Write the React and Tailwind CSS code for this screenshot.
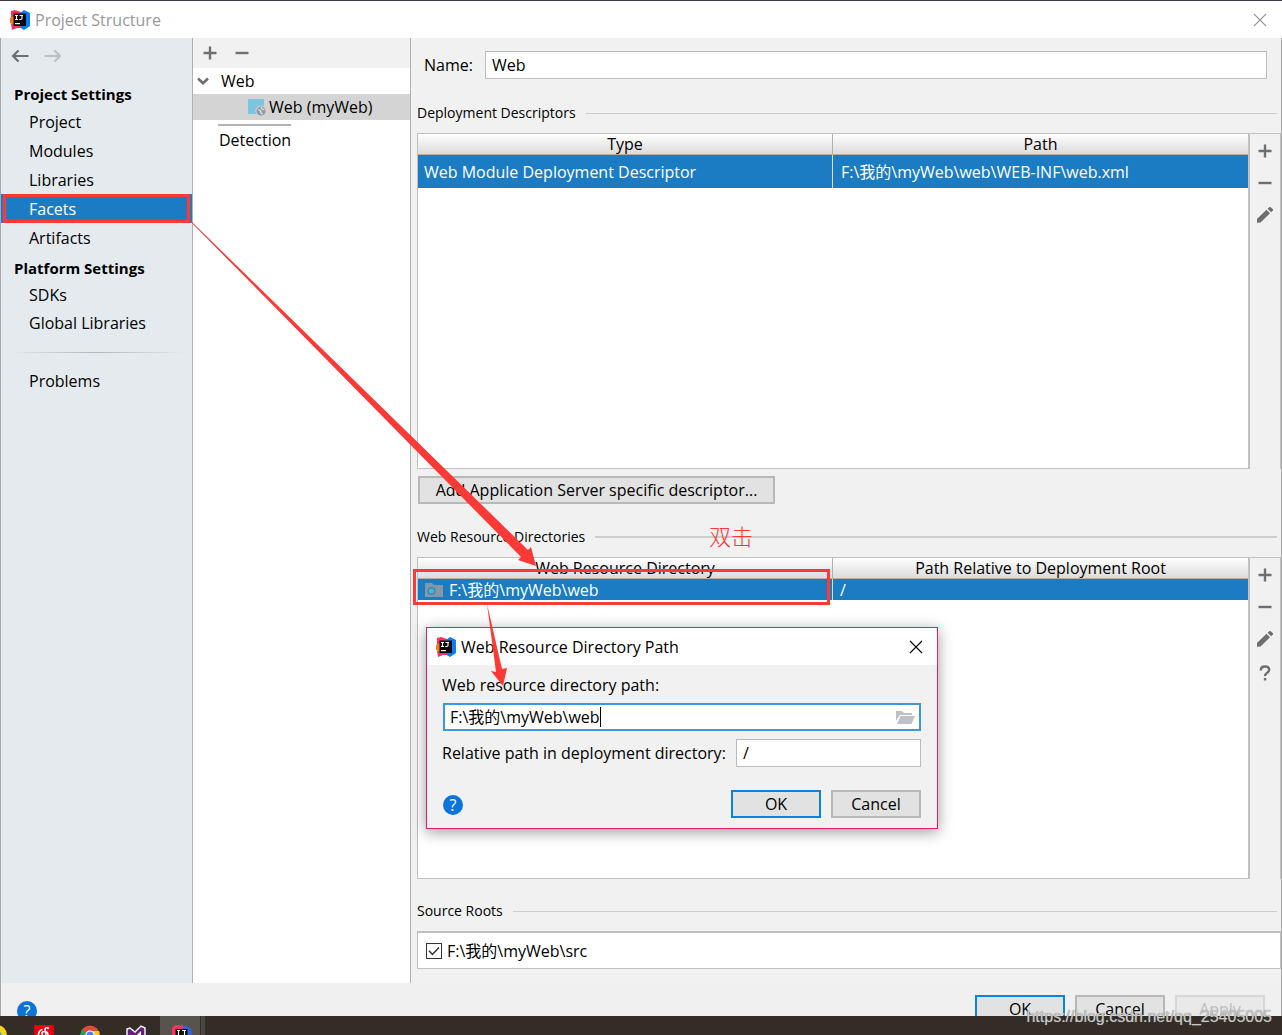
import { useState } from "react";

const projectItems = ["Project", "Modules", "Libraries", "Facets", "Artifacts"];
const platformItems = ["SDKs", "Global Libraries"];

function IdeaLogo() {
  return (
    <svg width="20" height="20" viewBox="0 0 20 20" className="shrink-0">
      <path d="M1 1 L5 0 L11 2 L10 10 L4 14 L1 9 Z" fill="#fe315d" />
      <path d="M0 8 L4 6 L5 15 L0 13 Z" fill="#f97a12" />
      <path d="M10 3 L14 0 L20 3 L20 16 L14 20 L9 17 Z" fill="#087cfa" />
      <path d="M1 14 L9 14 L12 18 L7 18 L2 20 Z" fill="#fe315d" />
      <rect x="3.5" y="3.5" width="12.5" height="12.5" fill="#0a0a0a" />
      <path d="M5 5.500h3M6.500 5.500v4M5 9.500h3M9.500 5.500h3.500M12 5.500v3q0 1.200-2.800 1" stroke="#fff" strokeWidth="1.1" fill="none" />
      <path d="M5 13.6h5" stroke="#fff" strokeWidth="1.2" />
    </svg>
  );
}

function PlusIcon() {
  return (
    <svg width="14" height="14" viewBox="0 0 14 14">
      <path d="M7 .5v13M.5 7h13" stroke="#6e6e6e" strokeWidth="2.4" />
    </svg>
  );
}

function MinusIcon() {
  return (
    <svg width="14" height="14" viewBox="0 0 14 14">
      <path d="M.5 7h13" stroke="#6e6e6e" strokeWidth="2.4" />
    </svg>
  );
}

function PencilIcon() {
  return (
    <svg width="18" height="18" viewBox="0 0 18 18">
      <path d="M1 13 L10.5 3.8 L14 7.3 L4.5 16.6 L1 16.8 Z" fill="#6e6e6e" />
      <path d="M11.6 2.8 L13.2 1.2 Q14 .6 14.8 1.2 L16.7 3.1 Q17.4 4 16.7 4.7 L15.1 6.3 Z" fill="#6e6e6e" />
    </svg>
  );
}

function QuestionIcon() {
  return (
    <svg width="14" height="16" viewBox="0 0 14 16">
      <path d="M2.800 5.400Q2.800 1.500 7 1.500T11.200 4.800Q11.200 6.600 9 8T7 11.200" stroke="#6e6e6e" strokeWidth="2.4" fill="none" />
      <rect x="5.800" y="13" width="2.500" height="2.500" fill="#6e6e6e" />
    </svg>
  );
}

function CloseIcon({ color }) {
  return (
    <svg width="14" height="14" viewBox="0 0 14 14">
      <path d="M1 1l12 12M13 1L1 13" stroke={color} strokeWidth="1.1" />
    </svg>
  );
}

function ArrowIcon({ color, flip }) {
  return (
    <svg width="18" height="14" viewBox="0 0 18 14" className={flip ? "rotate-180" : ""}>
      <path d="M17.5 7H2M7.5 1.5L2 7l5.5 5.5" stroke={color} strokeWidth="2.2" fill="none" />
    </svg>
  );
}

function HelpButton() {
  return (
    <button
      type="button"
      aria-label="Help"
      className="flex size-5 items-center justify-center rounded-full bg-[#0a74da] leading-5 text-white"
    >
      ?
    </button>
  );
}

function DialogButton({ children, primary, disabled }) {
  const look = primary
    ? "border-2 border-[#0a84e0] bg-[#e2e2e2]"
    : disabled
      ? "border-2 border-[#d6d6d6] bg-[#e9e9e9] text-[#bdbdbd]"
      : "border-2 border-[#b8b8b8] bg-[#e2e2e2]";
  return (
    <button type="button" disabled={disabled} className={`h-7 w-[90px] leading-5 ${look}`}>
      {children}
    </button>
  );
}

function SectionTitle({ children, thick }) {
  return (
    <div className="flex h-5 items-center gap-2.5 pr-1 text-sm">
      <h2>{children}</h2>
      <div className={thick ? "h-0.5 flex-1 bg-[#cdcdcd]" : "h-px flex-1 bg-[#cdcdcd]"} />
    </div>
  );
}

function HeaderCell({ children, last }) {
  return (
    <th
      className={`h-[21px] border-b border-[#b0b0b0] bg-linear-to-b from-white to-[#dcdcdc] p-0 leading-5 font-normal ${
        last ? "" : "border-r"
      }`}
    >
      {children}
    </th>
  );
}

function ToolColumn({ help }) {
  return (
    <div className="flex w-[33px] shrink-0 flex-col items-center border-r border-l-2 border-[#c0c0c0] pt-1">
      <button type="button" aria-label="Add" className="flex h-[26px] w-full items-center justify-center">
        <PlusIcon />
      </button>
      <button type="button" aria-label="Remove" className="mt-1.5 flex h-[26px] w-full items-center justify-center">
        <MinusIcon />
      </button>
      <button type="button" aria-label="Edit" className="mt-1.5 flex h-[26px] w-full items-center justify-center">
        <PencilIcon />
      </button>
      {help && (
        <button type="button" aria-label="Help" className="mt-2 flex h-[26px] w-full items-center justify-center">
          <QuestionIcon />
        </button>
      )}
    </div>
  );
}

function NavItem({ label, active, onClick, height }) {
  return (
    <li>
      <button
        type="button"
        onClick={onClick}
        className={`relative block w-full pl-7 text-left ${height} ${active ? "bg-[#1b7cc4] text-white" : ""}`}
      >
        {label}
        {active && <span className="absolute inset-y-0 right-0.5 left-0.5 border-3 border-[#fb3936]" />}
      </button>
    </li>
  );
}

function Sidebar() {
  const [selected, setSelected] = useState("Facets");

  return (
    <nav className="w-48 shrink-0 border-r border-[#b0b0b0] bg-[#e5eaee]">
      <div className="flex h-10 items-center gap-[15px] pb-1 pl-2.5">
        <button type="button" aria-label="Back"><ArrowIcon color="#6e6e6e" /></button>
        <button type="button" aria-label="Forward"><ArrowIcon color="#bcbfc2" flip /></button>
      </div>
      <h2 className="h-[29px] pt-1 pl-[13px] text-[15px] leading-6 font-bold">Project Settings</h2>
      <ul>
        {projectItems.map((item) => (
          <NavItem
            key={item}
            label={item}
            height="h-[29px]"
            active={item === selected}
            onClick={() => setSelected(item)}
          />
        ))}
      </ul>
      <h2 className="h-[29px] pt-1 pl-[13px] text-[15px] leading-6 font-bold">Platform Settings</h2>
      <ul>
        {platformItems.map((item) => (
          <NavItem
            key={item}
            label={item}
            height="h-7"
            active={item === selected}
            onClick={() => setSelected(item)}
          />
        ))}
      </ul>
      <div className="mx-2 mt-[15px] mb-3.5 h-px bg-linear-to-r from-transparent via-[#b4b4b4] to-transparent" />
      <ul>
        <NavItem
          label="Problems"
          height="h-7"
          active={selected === "Problems"}
          onClick={() => setSelected("Problems")}
        />
      </ul>
    </nav>
  );
}

function FacetTree() {
  return (
    <div className="w-[218px] shrink-0 border-r border-[#b0b0b0] bg-white">
      <div className="flex h-[30px] items-center gap-[18px] bg-[#f1f1f1] pl-2.5">
        <button type="button" aria-label="Add facet"><PlusIcon /></button>
        <button type="button" aria-label="Remove facet"><MinusIcon /></button>
      </div>
      <button type="button" className="flex h-[26px] w-full items-center gap-3 pl-1">
        <svg width="12" height="10" viewBox="0 0 12 10">
          <path d="M1 2.5L6 7.2L11 2.5" stroke="#6e6e6e" strokeWidth="2.6" fill="none" />
        </svg>
        Web
      </button>
      <button type="button" className="flex h-[26px] w-full items-center gap-[3px] bg-[#d4d4d4] pl-[55px]">
        <svg width="18" height="18" viewBox="0 0 18 18">
          <rect x="0" y="1" width="16" height="15" fill="#7cc5dc" />
          <circle cx="13" cy="13" r="5.6" fill="#d4d4d4" />
          <circle cx="13" cy="13" r="4.6" fill="#929ba4" />
          <path d="M10 11.5l2.6 1.2.4 2.2 1.6 1.4M13 9.2l1 1.8 2.4.6" stroke="#dfe3e6" strokeWidth="1.2" fill="none" />
        </svg>
        Web (myWeb)
      </button>
      <div className="mt-1 ml-[25px] h-0.5 w-[73px] bg-[#b4b4b4]" />
      <button type="button" className="block h-7 w-full pl-[26px] text-left">Detection</button>
    </div>
  );
}

function FacetEditor() {
  return (
    <main className="flex min-w-0 flex-1 flex-col bg-[#f1f1f1] pl-1.5">
      <div className="flex items-center gap-3 pt-[13px] pr-3.5 pl-[7px]">
        <label htmlFor="facet-name">Name:</label>
        <input
          id="facet-name"
          defaultValue="Web"
          className="h-7 min-w-0 flex-1 border border-[#bcbcbc] bg-white px-1.5 outline-none"
        />
      </div>

      <div className="mt-6">
        <SectionTitle>Deployment Descriptors</SectionTitle>
      </div>
      <div className="mt-2.5 flex h-84 shrink-0 border-t border-l border-[#c0c0c0]">
        <div className="flex-1 border-b border-[#c0c0c0] bg-white">
          <table className="w-full table-fixed border-separate border-spacing-0">
            <thead>
              <tr>
                <HeaderCell>Type</HeaderCell>
                <HeaderCell last>Path</HeaderCell>
              </tr>
            </thead>
            <tbody className="bg-[#1b7cc4] text-white">
              <tr>
                <td className="h-[33px] border-r border-[#dcdcdc] p-0 pl-1.5">Web Module Deployment Descriptor</td>
                <td className="p-0 pl-2">F:\我的\myWeb\web\WEB-INF\web.xml</td>
              </tr>
            </tbody>
          </table>
        </div>
        <ToolColumn />
      </div>

      <button
        type="button"
        className="mt-[7px] ml-px h-7 w-[357px] shrink-0 border-2 border-[#b8b8b8] bg-[#e2e2e2] leading-5"
      >
        Add Application Server specific descriptor...
      </button>

      <div className="relative mt-[23px]">
        <SectionTitle thick>Web Resource Directories</SectionTitle>
        <span className="absolute -top-1.5 left-[292px] font-['Noto_Sans_CJK_SC',sans-serif] text-[22px] leading-7 font-light text-[#fb3936]">
          双击
        </span>
      </div>
      <div className="relative mt-2.5 flex flex-1 border-t border-l border-[#c0c0c0]">
        <div className="relative flex-1 border-b border-[#c0c0c0] bg-white">
          <table className="w-full table-fixed border-separate border-spacing-0">
            <thead>
              <tr>
                <HeaderCell>Web Resource Directory</HeaderCell>
                <HeaderCell last>Path Relative to Deployment Root</HeaderCell>
              </tr>
            </thead>
            <tbody className="bg-[#1b7cc4] text-white">
              <tr>
                <td className="h-[21px] border-r border-[#dcdcdc] p-0 pl-[7px]">
                  <div className="flex h-[21px] items-center gap-1.5">
                    <svg width="18" height="14" viewBox="0 0 18 14">
                      <path d="M0 0h7l2 2h9v12H0z" fill="#8498a8" />
                      <circle cx="6.5" cy="8" r="3.4" fill="#40b6e0" stroke="#3f7fa6" strokeWidth="1.2" />
                    </svg>
                    F:\我的\myWeb\web
                  </div>
                </td>
                <td className="h-[21px] p-0 pl-[7px] leading-5">/</td>
              </tr>
            </tbody>
          </table>
          <span className="absolute top-[11px] -left-[5px] h-9 w-[calc(50%+2px)] border-3 border-[#fb3936]" />
        </div>
        <ToolColumn help />
      </div>

      <div className="mt-[22px]">
        <SectionTitle>Source Roots</SectionTitle>
      </div>
      <div className="mt-2.5 mb-3.5 flex h-[38px] shrink-0 items-center border border-t-2 border-[#c0c0c0] bg-white pl-2">
        <label className="flex items-center gap-[5px]">
          <span className="relative flex size-4">
            <input
              type="checkbox"
              defaultChecked
              className="peer size-4 appearance-none border border-[#333] bg-white"
            />
            <svg
              width="16"
              height="16"
              viewBox="0 0 16 16"
              className="pointer-events-none absolute inset-0 hidden peer-checked:block"
            >
              <path d="M3 7.8L6.4 11.4L13 4.4" stroke="#333" strokeWidth="1.5" fill="none" />
            </svg>
          </span>
          F:\我的\myWeb\src
        </label>
      </div>
    </main>
  );
}

function PathDialog() {
  return (
    <div
      role="dialog"
      aria-labelledby="path-dialog-title"
      className="absolute top-[627px] left-[426px] w-128 border border-[#e0206f] bg-[#f1f1f1] shadow-[0_3px_14px_rgba(0,0,0,0.4)]"
    >
      <div className="flex h-[37px] items-center gap-1 bg-white pr-3.5 pl-[9px]">
        <IdeaLogo />
        <h2 id="path-dialog-title" className="flex-1 pl-px">Web Resource Directory Path</h2>
        <button type="button" aria-label="Close"><CloseIcon color="#000" /></button>
      </div>
      <form className="px-4 pb-2.5" onSubmit={(e) => e.preventDefault()}>
        <label htmlFor="resource-path" className="-ml-px block h-[38px] pt-[7px]">
          Web resource directory path:
        </label>
        <div className="flex h-7 items-center border-2 border-[#3a97e0] bg-white pr-1 pl-[5px]">
          <input
            id="resource-path"
            defaultValue="F:\我的\myWeb\web"
            className="field-sizing-content outline-none"
          />
          <span className="h-5 w-px shrink-0 bg-black" />
          <button type="button" aria-label="Browse" className="ml-auto">
            <svg width="19" height="15" viewBox="0 0 19 15">
              <path d="M0 1h6l2 2h8v2H4L0 11z" fill="#bcc2c7" />
              <path d="M4.5 6H19l-3.5 8H1z" fill="#bcc2c7" />
            </svg>
          </button>
        </div>
        <div className="mt-2 flex items-center justify-between">
          <label htmlFor="relative-path" className="-ml-px">Relative path in deployment directory:</label>
          <input
            id="relative-path"
            defaultValue="/"
            className="h-7 w-[185px] border border-[#bcbcbc] bg-white px-1.5 outline-none"
          />
        </div>
        <div className="mt-[23px] flex items-center gap-2.5">
          <div className="flex-1 pt-0.5">
            <HelpButton />
          </div>
          <DialogButton primary>OK</DialogButton>
          <DialogButton>Cancel</DialogButton>
        </div>
      </form>
    </div>
  );
}

function Taskbar() {
  return (
    <div className="flex h-[19px] shrink-0 overflow-hidden bg-[#332d26]">
      <svg width="205" height="19" viewBox="0 0 205 19">
        <rect x="160" width="40" height="19" fill="#57534d" />
        <rect x="201" width="4" height="19" fill="#4a4640" />
        <circle cx="-3" cy="19" r="10" fill="#f7d51d" />
        <circle cx="-3" cy="20" r="5" fill="#2f9be8" />
        <rect x="34" y="9" width="20" height="10" fill="#e60012" />
        <path d="M38.500 19q0-4.500 4-5.500M42.500 19q-1.500-3.500 2-3.500t3.500 3.500M49 12.500q-3.500-2-4 1l1 5.500" stroke="#fff" strokeWidth="1.6" fill="none" />
        <circle cx="90" cy="19" r="9.5" fill="#de4b3b" />
        <path d="M80.5 19q0-4 2-6l4 6z" fill="#22a05a" />
        <path d="M90 15h9q1 2 .5 4H90z" fill="#fbc916" />
        <circle cx="90" cy="19" r="4.6" fill="#fff" />
        <circle cx="90" cy="19" r="3.6" fill="#4285f4" />
        <path d="M127 20v-7l3-1 5 4 6-6 4 2v8" fill="#68217a" stroke="#fff" strokeWidth="1.4" />
        <path d="M137 19l4-4v4z" fill="#fff" />
        <path d="M172 12l3-3h7l3 3-3 7h-10z" fill="#fe315d" />
        <path d="M183 11l3-2 5 4 1 6h-10z" fill="#3460e8" />
        <rect x="175.500" y="13" width="12" height="6" fill="#111" />
        <path d="M177 14.500h3M178.500 14.500v5M182 14.500h4M184.500 14.500v5" stroke="#fff" strokeWidth="1.100" />
      </svg>
    </div>
  );
}

export default function App() {
  return (
    <div className="relative flex h-screen min-h-[900px] flex-col overflow-hidden bg-[#f0f0f0] font-['Open_Sans','Noto_Sans_CJK_SC',sans-serif] text-base leading-[26px] text-black">
      <header className="flex h-[38px] shrink-0 items-center gap-1 border-t border-[#3f3a46] bg-white pr-[15px] pl-2.5">
        <IdeaLogo />
        <h1 className="flex-1 pl-px text-[#999]">Project Structure</h1>
        <button type="button" aria-label="Close window"><CloseIcon color="#999" /></button>
      </header>

      <div className="flex min-h-0 flex-1 border-x border-[#a8a8a8]">
        <Sidebar />
        <FacetTree />
        <FacetEditor />
      </div>

      <footer className="flex h-[33px] shrink-0 items-start gap-2.5 overflow-hidden border-x border-[#a8a8a8] pt-3 pr-4 pl-4">
        <div className="flex-1 pt-1.5">
          <HelpButton />
        </div>
        <DialogButton primary>OK</DialogButton>
        <DialogButton>Cancel</DialogButton>
        <DialogButton disabled>Apply</DialogButton>
      </footer>
      <Taskbar />

      <PathDialog />

      <svg width="600" height="700" viewBox="0 0 600 700" className="pointer-events-none absolute top-0 left-0">
        <path d="M183 214L192 222L528 550L531 547L536 566L518 560L521 557Z" fill="#fb3936" />
        <path d="M487 604L502 669L507 668L503 686L491 671L496 672Z" fill="#fb3936" />
      </svg>

      <span className="pointer-events-none absolute right-2.5 bottom-2 font-['Liberation_Sans',sans-serif] text-base leading-5 text-[#c8c8c8] [text-shadow:0_0_1px_#777]">
        https://blog.csdn.net/qq_25405005
      </span>
    </div>
  );
}
